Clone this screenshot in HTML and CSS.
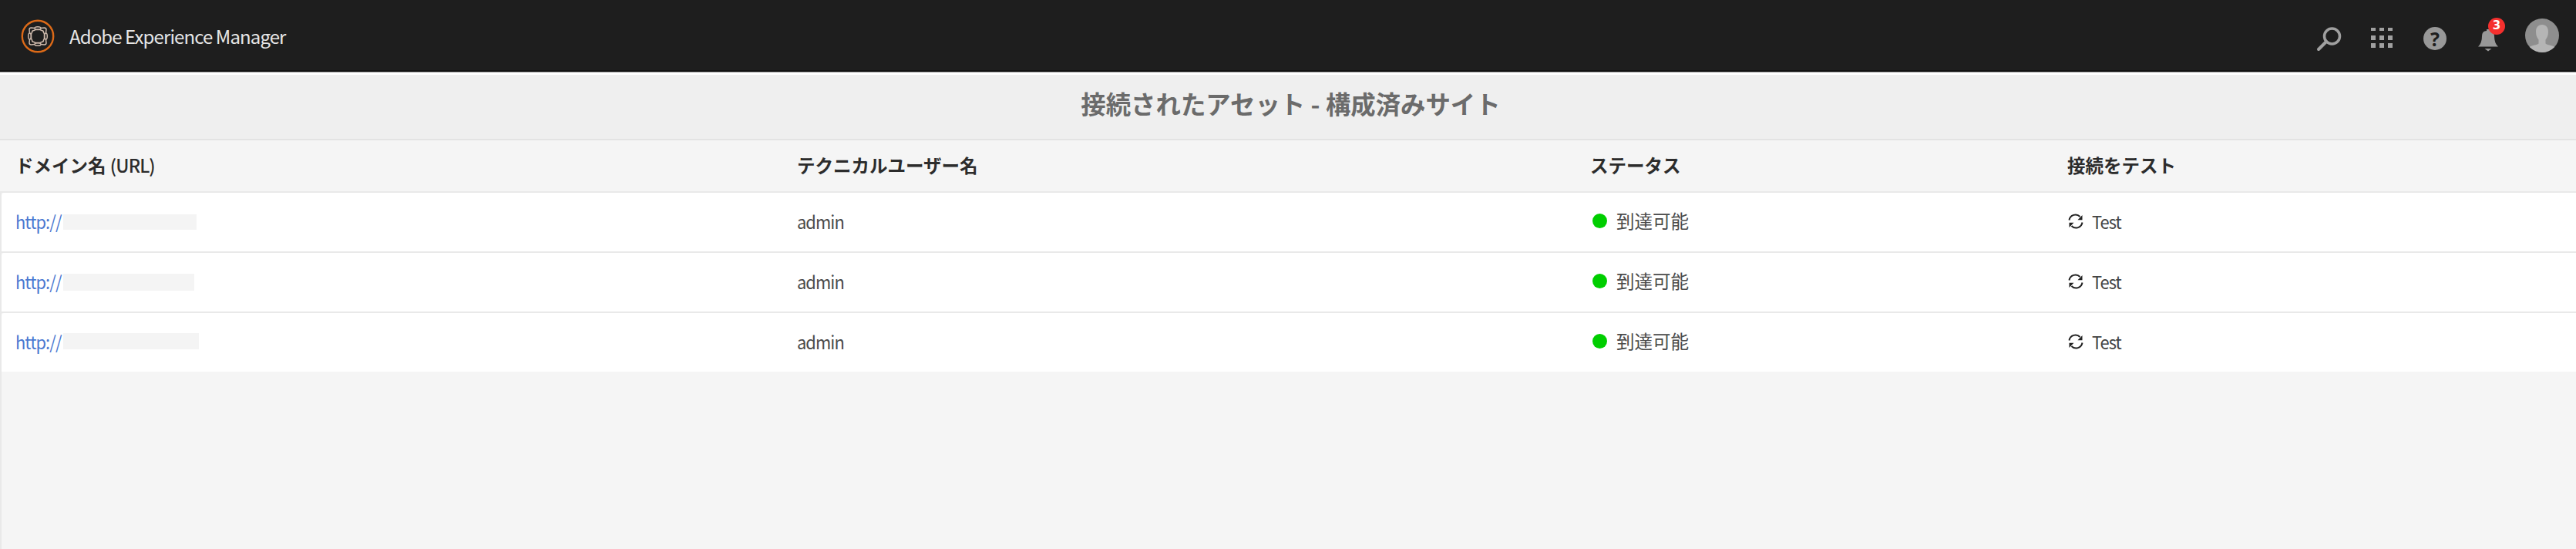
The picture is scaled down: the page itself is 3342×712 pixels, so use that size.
FILE: index.html
```html
<!DOCTYPE html>
<html lang="ja">
<head>
<meta charset="utf-8">
<title>Adobe Experience Manager</title>
<link rel="stylesheet" href="styles.css">
</head>
<body>
<svg class="defs" width="0" height="0">
  <symbol id="refresh" viewBox="0 0 20 20">
    <path d="M1.500 8.500A8.200 8.200 0 0 1 15.500 4" fill="none" stroke="currentColor" stroke-width="2"/>
    <path d="M18.500 2V8.200H12.500Z" fill="currentColor"/>
    <path d="M18.500 11.500A8.200 8.200 0 0 1 4.500 16" fill="none" stroke="currentColor" stroke-width="2"/>
    <path d="M1.500 18V11.800H7.500Z" fill="currentColor"/>
  </symbol>
</svg>
<header class="shell">
  <svg class="logo" viewBox="0 0 44 44">
    <circle cx="22" cy="22" r="20.200" fill="none" stroke="#dc6a18" stroke-width="2.400"/>
    <g fill="none" stroke="#cdb9ab" stroke-width="1.500">
      <path d="M17 14.500L19 13.500H25L27 14.500Q29.500 14.500 29.500 17L30.500 19V25L29.500 27Q29.500 29.500 27 29.500L25 30.500H19L17 29.500Q14.500 29.500 14.500 27L13.500 25V19L14.500 17Q14.500 14.500 17 14.500Z"/>
      <path d="M18 11.500L13.500 11Q11 11 11 13.500L11.500 18M26 11.500L30.500 11Q33 11 33 13.500L32.500 18M18 32.500L13.500 33Q11 33 11 30.500L11.500 26M26 32.500L30.500 33Q33 33 33 30.500L32.500 26"/>
      <ellipse cx="22" cy="11.500" rx="4" ry="1.800"/>
      <ellipse cx="22" cy="32.500" rx="4" ry="1.800"/>
      <ellipse cx="11.500" cy="22" rx="1.800" ry="4"/>
      <ellipse cx="32.500" cy="22" rx="1.800" ry="4"/>
    </g>
  </svg>
  <span class="product">Adobe Experience Manager</span>
  <nav class="tools">
    <svg class="search" viewBox="0 0 34 32"><circle cx="20.500" cy="12" r="10" fill="none" stroke="#a0a0a0" stroke-width="3.500"/><path d="M13 19L3 29" stroke="#a0a0a0" stroke-width="4" stroke-linecap="round"/></svg>
    <svg class="apps" viewBox="0 0 30 28" fill="#a0a0a0"><path d="M1 1h6v4h-6zM12 1h6v4h-6zM23 1h6v4h-6zM1 11h6v6h-6zM12 11h6v6h-6zM23 11h6v6h-6zM1 21h6v6h-6zM12 21h6v6h-6zM23 21h6v6h-6z"/></svg>
    <span class="help">?</span>
    <span class="alerts"><svg class="bell" viewBox="0 0 28 30" fill="#989898"><path d="M1 23.500Q6 19 6 10Q6 3 12 3V1H16V3Q22 3 22 10Q22 19 27 23.500ZM9.500 26H18.500L14 29.500Z"/></svg><span class="badge">3</span></span>
    <svg class="avatar" viewBox="0 0 44 44"><clipPath id="round"><circle cx="22" cy="22" r="22"/></clipPath><g clip-path="url(#round)"><path fill="#8e8e8e" d="M0 0h44v44H0z"/><path fill="#b5b5b5" d="M22 8C27 8 30 11.500 30 17C30 22 28.500 25 26.500 27.500V32.500C29 34.500 34 34.500 39 37V44H5V37C10 34.500 15 34.500 17.500 32.500V27.500C15.500 25 14 22 14 17C14 11.500 17 8 22 8Z"/></g></svg>
  </nav>
</header>
<h1 class="title">接続されたアセット - 構成済みサイト</h1>
<main>
  <div class="row head"><span>ドメイン名 <span class="paren">(URL)</span></span><span>テクニカルユーザー名</span><span>ステータス</span><span>接続をテスト</span></div>
  <div class="body">
    <div class="row"><a class="url"><span class="latin scheme">http://</span><i class="mask m1"></i></a><span class="latin">admin</span><span class="status"><i class="dot"></i>到達可能</span><span class="test"><svg><use href="#refresh"/></svg><span class="latin">Test</span></span></div>
    <div class="row"><a class="url"><span class="latin scheme">http://</span><i class="mask m2"></i></a><span class="latin">admin</span><span class="status"><i class="dot"></i>到達可能</span><span class="test"><svg><use href="#refresh"/></svg><span class="latin">Test</span></span></div>
    <div class="row"><a class="url"><span class="latin scheme">http://</span><i class="mask m3"></i></a><span class="latin">admin</span><span class="status"><i class="dot"></i>到達可能</span><span class="test"><svg><use href="#refresh"/></svg><span class="latin">Test</span></span></div>
  </div>
</main>
</body>
</html>
```

FILE: styles.css
```css
* { box-sizing: border-box; }
body {
  margin: 0;
  height: 712px;
  overflow: hidden;
  display: flex;
  flex-direction: column;
  background: #f5f5f5;
  color: #4b4b4b;
  font: 23.5px/34px "Noto Sans CJK JP", sans-serif;
}
.defs { position: absolute; }
.shell {
  height: 97px;
  flex: none;
  display: flex;
  align-items: flex-start;
  padding: 25px 22px 0 27px;
  background: linear-gradient(#1e1e1e 91px, #111 91px, #111 93px, #999 93px, #999 94px, #fff 94px);
}
.logo { width: 44px; height: 44px; }
.product { margin: 5px 0 0 19px; color: #e6e6e6; font-size: 24px; letter-spacing: -0.9px; white-space: nowrap; }
.tools { margin-left: auto; display: flex; align-items: flex-start; }
.search { width: 34px; height: 32px; margin: 10px 36px 0 0; }
.apps { width: 30px; height: 28px; margin: 10px 39px 0 0; }
.help {
  width: 30px; height: 30px; margin: 10px 40px 0 0;
  border-radius: 50%; background: #989898; color: #1e1e1e;
  font: bold 25px/30px "Noto Sans", sans-serif; text-align: center;
}
.alerts { position: relative; width: 28px; height: 30px; margin: 12px 34px 0 0; }
.bell { display: block; width: 28px; height: 30px; }
.badge {
  position: absolute; left: 14px; top: -14px; width: 22px; height: 22px;
  border-radius: 50%; background: #f5302e; color: #fff;
  font: bold 15px/20px "DejaVu Sans", sans-serif; text-align: center;
}
.avatar { width: 44px; height: 44px; margin-top: -1px; }
.title {
  margin: 0; height: 85px; flex: none;
  padding: 15px 0 0 7px;
  background: #efefef; border-bottom: 2px solid #e3e3e3;
  color: #6b6b6b; text-align: center; font-size: 32.4px; line-height: 44px; font-weight: 700;
}
main { flex: 1; display: flex; flex-direction: column; }
.row {
  display: grid;
  grid-template-columns: 1014px 1029px 619px 1fr;
  height: 78px;
  padding: 0 0 4px 18px;
  align-items: center;
  background: #fff;
  border-bottom: 2px solid #e9e9e9;
  border-top-left-radius: 4px;
  white-space: nowrap;
}
.row:last-child { height: 76px; border-bottom: 0; }
.row.head { height: 68px; padding: 0 0 2px 20px; background: #f5f5f5; color: #2c2c2c; font-weight: 700; border-radius: 0; border-bottom: 2px solid #e9e9e9; }
.paren { font-weight: 500; letter-spacing: -0.9px; }
.body { flex: 1; border-left: 2px solid #e9e9e9; }
.url { display: flex; align-items: center; color: #4b79d1; }
.scheme { width: 62px; }
.mask { height: 20px; background: #f4f4f4; margin-top: 3px; }
.m1 { width: 173px; }
.m2 { width: 170px; height: 22px; }
.m3 { width: 176px; height: 21px; margin-top: 1px; }
.latin { letter-spacing: -1px; padding-top: 2px; transform: scaleX(0.93); transform-origin: left; }
.status { display: flex; align-items: center; padding-left: 3px; }
.dot { width: 19px; height: 19px; margin-right: 12px; border-radius: 50%; background: #00ce00; }
.test { display: flex; align-items: center; color: #444; padding-left: 1px; }
.test svg { width: 20px; height: 20px; margin: 1px 11px 0 0; color: #222; }
```
